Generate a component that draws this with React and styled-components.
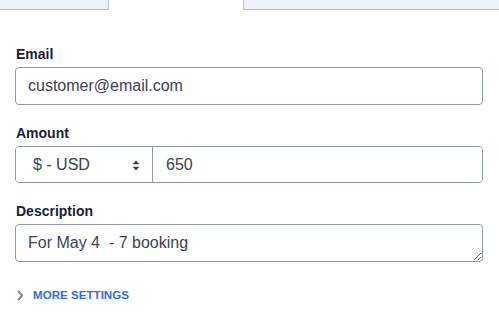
import React from "react";
import styled, { createGlobalStyle } from "styled-components";

const Global = createGlobalStyle`
  html, body { margin: 0; padding: 0; background: #ffffff; }
  body { font-family: "Liberation Sans", Arial, sans-serif; }
  * { box-sizing: border-box; }
`;

const Page = styled.div`
  width: 499px;
  height: 322px;
  overflow: hidden;
  background: #fff;
`;

const TabBar = styled.div`
  display: flex;
  height: 10px;
`;

const Tab = styled.div`
  background: #edf1f7;
  border-bottom: 1px solid #b6c0d1;
  ${(p) => (p.$side === "left" ? "width: 109px; border-right: 1px solid #b6c0d1;" : "flex: 1; border-left: 1px solid #b6c0d1;")}
`;

const ActiveTab = styled.div`
  width: 134px;
  background: #fff;
`;

const Form = styled.div`
  padding: 34px 16px 0 15px;
  display: flex;
  flex-direction: column;
`;

const Field = styled.div`
  display: flex;
  flex-direction: column;
  margin-bottom: ${(p) => p.$mb ?? 18}px;
`;

const Label = styled.label`
  font-size: 14px;
  line-height: 20px;
  font-weight: 700;
  color: #1a1f36;
  margin-bottom: 3px;
  padding-left: 1px;
`;

const TextInput = styled.input`
  height: 38px;
  width: 100%;
  border: 1px solid #8e9aac;
  border-radius: 4px;
  padding: 0 12px;
  font-family: "Liberation Sans", Arial, sans-serif;
  font-size: 16px;
  color: #3c4257;
  outline: none;
  background: #fff;
`;

const Group = styled.div`
  display: flex;
  height: 37px;
  border: 1px solid #8e9aac;
  border-radius: 4px;
  overflow: hidden;
`;

const SelectWrap = styled.div`
  position: relative;
  width: 137px;
  border-right: 1px solid #8e9aac;
  flex: none;
`;

const Select = styled.select`
  appearance: none;
  -webkit-appearance: none;
  width: 100%;
  height: 100%;
  border: none;
  background: #fff;
  padding: 0 0 0 17px;
  font-family: "Liberation Sans", Arial, sans-serif;
  font-size: 16px;
  color: #3c4257;
  outline: none;
`;

const Arrows = styled.svg`
  position: absolute;
  right: 12px;
  top: 13px;
  pointer-events: none;
`;

const GroupInput = styled.input`
  flex: 1;
  min-width: 0;
  border: none;
  padding: 0 13px;
  font-family: "Liberation Sans", Arial, sans-serif;
  font-size: 16px;
  color: #3c4257;
  outline: none;
  background: #fff;
`;

const TextArea = styled.textarea`
  height: 38px;
  width: 100%;
  border: 1px solid #8e9aac;
  border-radius: 4px;
  padding: 9px 12px;
  font-family: "Liberation Sans", Arial, sans-serif;
  font-size: 16px;
  line-height: 18px;
  color: #3c4257;
  outline: none;
  resize: vertical;
  background: #fff;
  display: block;
`;

const MoreButton = styled.button`
  display: flex;
  align-items: center;
  gap: 9px;
  border: none;
  background: none;
  padding: 0 0 0 2px;
  margin-top: 4px;
  font-family: "Liberation Sans", Arial, sans-serif;
  font-size: 11.6px;
  line-height: 16px;
  font-weight: 700;
  color: #2f6fdc;
  text-transform: uppercase;
  cursor: pointer;
`;

export default function App() {
  return (
    <>
      <Global />
      <Page>
        <TabBar>
          <Tab $side="left" />
          <ActiveTab />
          <Tab $side="right" />
        </TabBar>
        <Form>
          <Field>
            <Label>Email</Label>
            <TextInput defaultValue="customer@email.com" />
          </Field>
          <Field>
            <Label>Amount</Label>
            <Group>
              <SelectWrap>
                <Select defaultValue="usd">
                  <option value="usd">$ - USD</option>
                </Select>
                <Arrows width="8" height="11" viewBox="0 0 8 11">
                  <path d="M4 0.5 L7.5 4.2 H0.5 Z" fill="#3c4257" />
                  <path d="M4 10.5 L7.5 6.8 H0.5 Z" fill="#3c4257" />
                </Arrows>
              </SelectWrap>
              <GroupInput defaultValue="650" />
            </Group>
          </Field>
          <Field $mb={21}>
            <Label>Description</Label>
            <TextArea rows={1} defaultValue="For May 4  - 7 booking" />
          </Field>
          <MoreButton>
            <svg width="7" height="11" viewBox="0 0 7 11">
              <path d="M1.5 1.5 L5.2 5.5 L1.5 9.5" fill="none" stroke="#7a8599" strokeWidth="1.9" strokeLinecap="round" strokeLinejoin="round" />
            </svg>
            More settings
          </MoreButton>
        </Form>
      </Page>
    </>
  );
}
